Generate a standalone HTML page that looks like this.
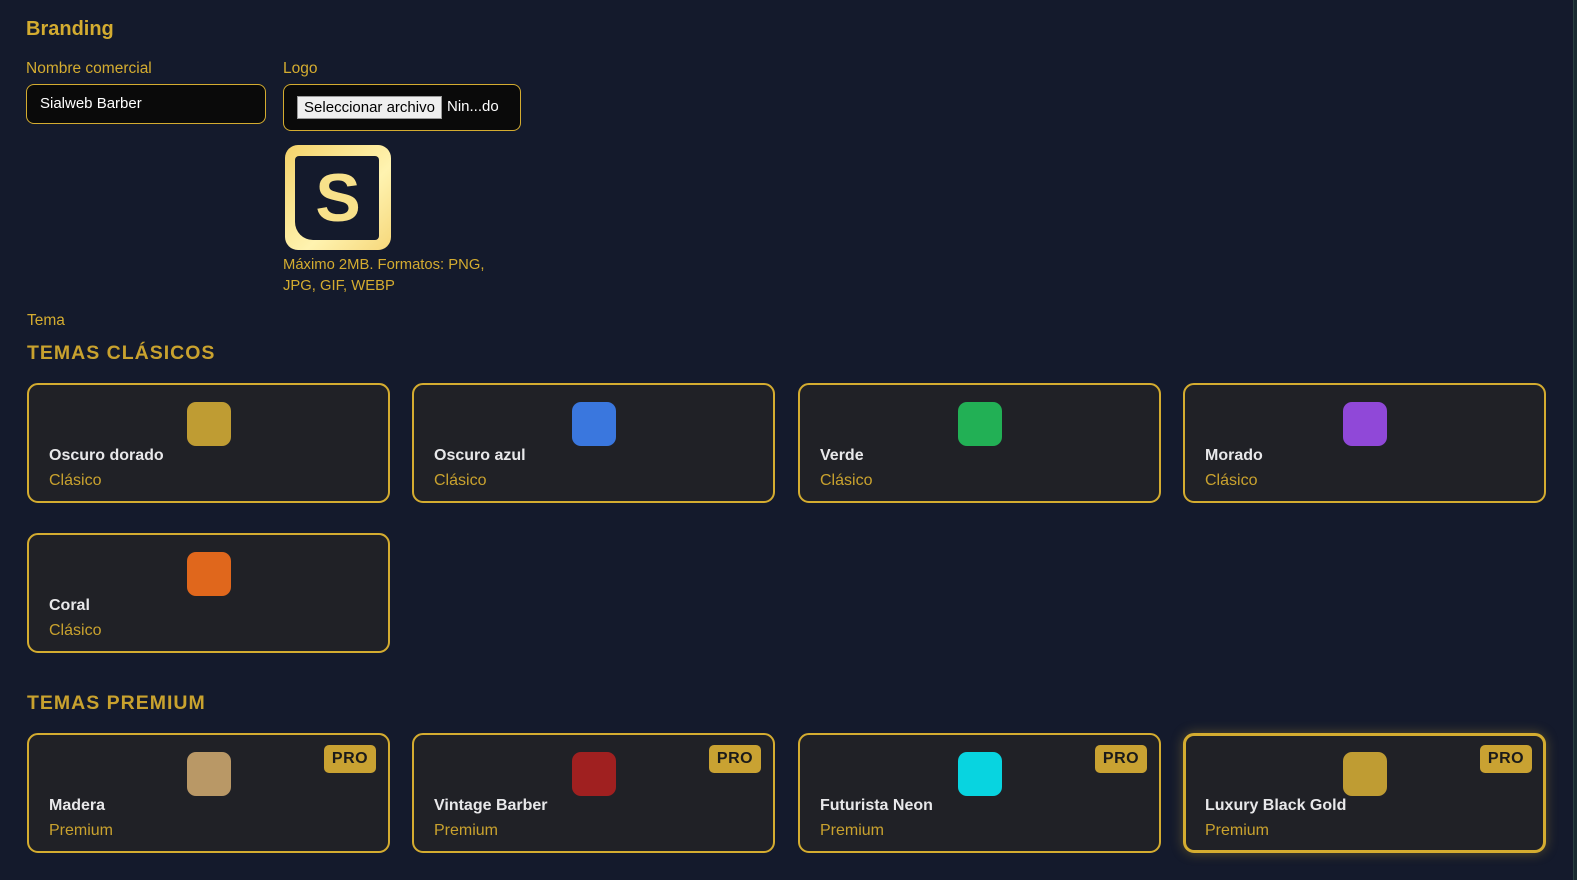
<!DOCTYPE html>
<html><head><meta charset="utf-8"><style>
*{box-sizing:border-box;margin:0;padding:0}
body{width:1577px;height:880px;background:#141a2c;font-family:"Liberation Sans",sans-serif;position:relative;overflow:hidden}
.strip{position:absolute;left:1573px;top:0;width:4px;height:880px;background:#1a2a30;border-left:1px solid #2a4040}
.abs{position:absolute}
h1{position:absolute;left:26px;top:18px;font-size:20px;font-weight:bold;color:#d4ac30}
.lbl{position:absolute;font-size:15.5px;color:#d4ac30}
.inp{position:absolute;background:#0a0a0a;border:1.5px solid #d4ac30;border-radius:8px;color:#fff;font-size:15px}
.sec{position:absolute;left:27px;font-size:19.5px;font-weight:bold;color:#c9a22e;letter-spacing:1px}
.card{position:absolute;width:363px;height:120px;background:#202126;border:2px solid #d4ac30;border-radius:11px}
.sw{position:absolute;left:158px;top:17px;width:44px;height:44px;border-radius:9px}
.nm{position:absolute;left:20px;top:62px;font-size:16px;font-weight:bold;color:#e8e8ea}
.sb{position:absolute;left:20px;top:87px;font-size:16px;color:#c9a22e}
.pro{position:absolute;right:12px;top:10px;width:52px;height:28px;background:#c9a232;border-radius:5px;color:#1a1a1a;font-weight:bold;font-size:16px;text-align:center;line-height:28px;letter-spacing:.5px}
</style></head><body>
<div class="strip"></div>
<h1>Branding</h1>
<div class="lbl" style="left:26px;top:60px">Nombre comercial</div>
<div class="lbl" style="left:283px;top:60px">Logo</div>
<div class="inp" style="left:26px;top:84px;width:240px;height:40px;padding:10px 13px;font-size:15px">Sialweb Barber</div>
<div class="inp" style="left:283px;top:84px;width:238px;height:47px">
<div class="abs" style="left:13px;top:11px;width:145px;height:23px;background:#efefef;border:1px solid #999;color:#000;font-size:15px;text-align:center;line-height:21px">Seleccionar archivo</div>
<div class="abs" style="left:163px;top:13px;font-size:15px">Nin...do</div></div>
<div class="abs" style="left:285px;top:145px;width:106px;height:105px;border-radius:13px;background:linear-gradient(135deg,#f4d26a,#fff3b0 60%,#f6d77a)">
<div class="abs" style="left:10px;top:11px;width:84px;height:84px;background:#141a2c;border-radius:4px 4px 4px 18px"></div>
<div class="abs" style="left:0;top:18px;width:106px;text-align:center;font-size:68px;font-weight:bold;color:#f8e18a;line-height:70px">S</div></div>
<div class="lbl" style="left:283px;top:255px;line-height:21px;font-size:14.8px">Máximo 2MB. Formatos: PNG,<br>JPG, GIF, WEBP</div>
<div class="lbl" style="left:27px;top:312px">Tema</div>
<div class="sec" style="top:342px">TEMAS CLÁSICOS</div>
<div class="card" style="left:27px;top:383px"><div class="sw" style="background:#bf9c33"></div><div class="nm">Oscuro dorado</div><div class="sb">Clásico</div></div>
<div class="card" style="left:412px;top:383px"><div class="sw" style="background:#3a77de"></div><div class="nm">Oscuro azul</div><div class="sb">Clásico</div></div>
<div class="card" style="left:798px;top:383px"><div class="sw" style="background:#22b055"></div><div class="nm">Verde</div><div class="sb">Clásico</div></div>
<div class="card" style="left:1183px;top:383px"><div class="sw" style="background:#9048d8"></div><div class="nm">Morado</div><div class="sb">Clásico</div></div>
<div class="card" style="left:27px;top:533px"><div class="sw" style="background:#e0671c"></div><div class="nm">Coral</div><div class="sb">Clásico</div></div>
<div class="sec" style="top:692px">TEMAS PREMIUM</div>
<div class="card" style="left:27px;top:733px"><div class="sw" style="background:#b99866"></div><div class="pro">PRO</div><div class="nm">Madera</div><div class="sb">Premium</div></div>
<div class="card" style="left:412px;top:733px"><div class="sw" style="background:#a02020"></div><div class="pro">PRO</div><div class="nm">Vintage Barber</div><div class="sb">Premium</div></div>
<div class="card" style="left:798px;top:733px"><div class="sw" style="background:#08d4e0"></div><div class="pro">PRO</div><div class="nm">Futurista Neon</div><div class="sb">Premium</div></div>
<div class="card" style="left:1183px;top:733px;border-width:3px;box-shadow:0 0 12px rgba(212,172,48,.35)"><div class="sw" style="background:#bf9c33;left:157px;top:16px"></div><div class="pro" style="right:11px;top:9px">PRO</div><div class="nm" style="left:19px;top:61px">Luxury Black Gold</div><div class="sb" style="left:19px;top:86px">Premium</div></div>
</body></html>
